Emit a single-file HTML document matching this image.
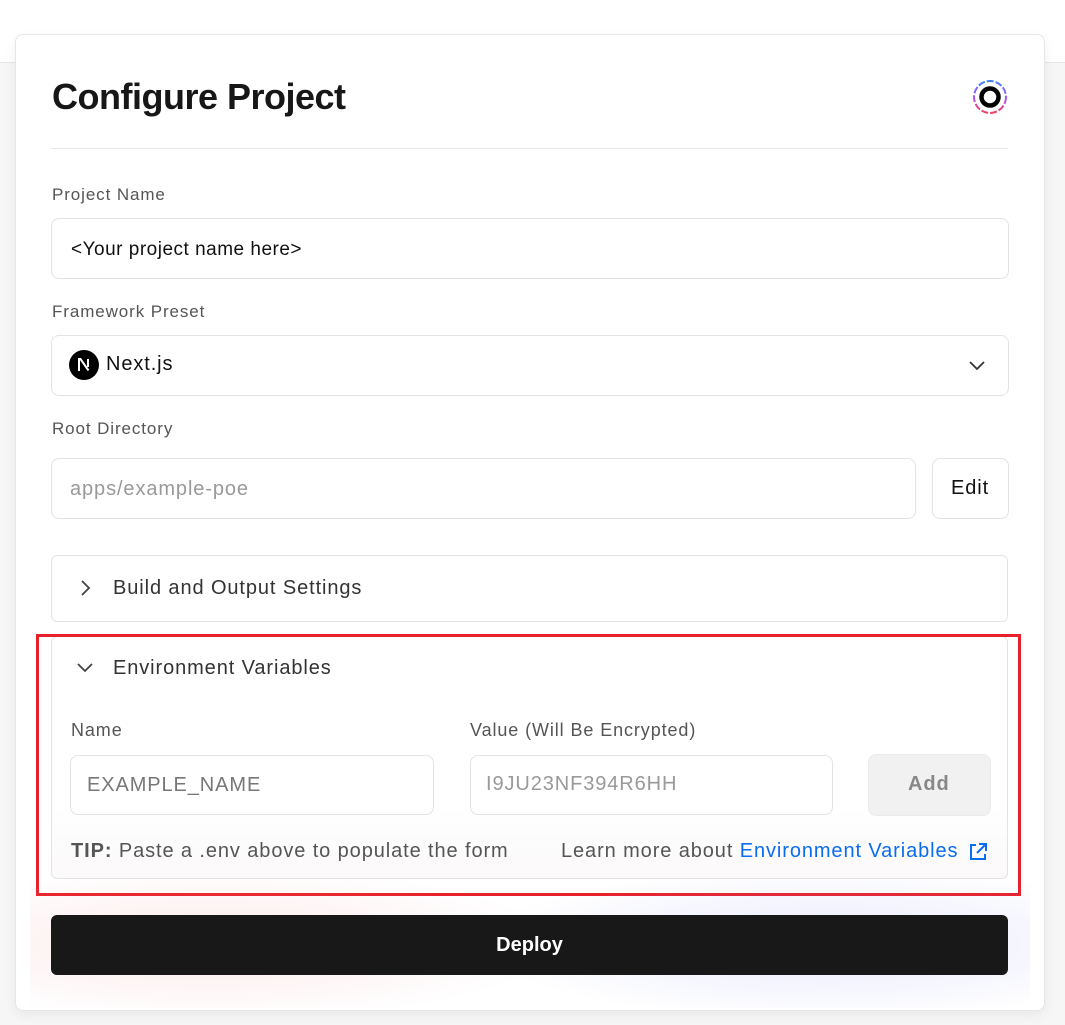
<!DOCTYPE html>
<html><head><style>
*{box-sizing:border-box;margin:0;padding:0}
body{width:1065px;height:1025px;background:#f6f6f6;font-family:"Liberation Sans",sans-serif;position:relative;overflow:hidden}
.top{position:absolute;left:0;top:0;width:1065px;height:63px;background:#fff;border-bottom:1px solid #e6e6e6}
.card{position:absolute;left:15px;top:34px;width:1030px;height:977px;background:#fff;border:1px solid #e6e6e6;border-radius:8px;box-shadow:0 4px 12px rgba(0,0,0,.06)}
.a{position:absolute}
h1{position:absolute;left:52px;top:76px;font-size:36px;font-weight:bold;color:#171717;letter-spacing:-0.5px}
.lbl{position:absolute;font-size:17px;color:#555;letter-spacing:0.9px}
.box{position:absolute;border:1px solid #e3e3e3;border-radius:8px;background:#fff}
.t{position:absolute;font-size:20px;letter-spacing:0.9px}
</style></head><body>
<div class="top"></div>
<div class="card"></div>
<h1>Configure Project</h1>
<svg class="a" style="left:972px;top:79px" width="36" height="36" viewBox="0 0 36 36">
<defs><linearGradient id="g" x1="0" y1="0" x2="0" y2="1"><stop offset="0" stop-color="#3b82f6"/><stop offset="0.5" stop-color="#a855f7"/><stop offset="1" stop-color="#f43f5e"/></linearGradient></defs>
<circle cx="18" cy="18" r="16" fill="none" stroke="url(#g)" stroke-width="2" stroke-dasharray="7 2"/>
<circle cx="18" cy="18" r="8.5" fill="none" stroke="#000" stroke-width="4.5"/>
</svg>
<div class="a" style="left:51px;top:148px;width:957px;height:1px;background:#e8e8e8"></div>

<div class="lbl" style="left:52px;top:185px">Project Name</div>
<div class="box" style="left:51px;top:218px;width:958px;height:61px"></div>
<div class="t" style="left:71px;top:239px;font-size:19px;color:#111;letter-spacing:0.5px">&lt;Your project name here&gt;</div>

<div class="lbl" style="left:52px;top:302px">Framework Preset</div>
<div class="box" style="left:51px;top:335px;width:958px;height:61px"></div>
<svg class="a" style="left:69px;top:350px" width="30" height="30" viewBox="0 0 30 30"><circle cx="15" cy="15" r="15" fill="#000"/><path d="M10 21V9h1.5l8 11.5M19 9v8" stroke="#fff" stroke-width="2" fill="none"/></svg>
<div class="t" style="left:106px;top:353px;color:#111">Next.js</div>
<svg class="a" style="left:968px;top:358px" width="18" height="14" viewBox="0 0 18 14"><path d="M2 4l7 7 7-7" stroke="#333" stroke-width="1.8" fill="none"/></svg>

<div class="lbl" style="left:52px;top:419px">Root Directory</div>
<div class="box" style="left:51px;top:458px;width:865px;height:61px"></div>
<div class="t" style="left:70px;top:478px;color:#999">apps/example-poe</div>
<div class="box" style="left:932px;top:458px;width:77px;height:61px"></div>
<div class="t" style="left:951px;top:477px;color:#111">Edit</div>

<div class="box" style="left:51px;top:555px;width:957px;height:67px;border-radius:6px"></div>
<svg class="a" style="left:78px;top:578px" width="14" height="20" viewBox="0 0 14 20"><path d="M4 3l7 7-7 7" stroke="#444" stroke-width="1.8" fill="none"/></svg>
<div class="t" style="left:113px;top:577px;color:#333">Build and Output Settings</div>

<div class="box" style="left:51px;top:636px;width:957px;height:243px;border-radius:6px;background:linear-gradient(#fff 70%,#fbf9fa)"></div>
<svg class="a" style="left:75px;top:661px" width="20" height="14" viewBox="0 0 20 14"><path d="M3 3l7 7 7-7" stroke="#444" stroke-width="1.8" fill="none"/></svg>
<div class="t" style="left:113px;top:657px;color:#333">Environment Variables</div>
<div class="lbl" style="left:71px;top:720px;font-size:18px">Name</div>
<div class="lbl" style="left:470px;top:720px;font-size:18px">Value (Will Be Encrypted)</div>
<div class="box" style="left:70px;top:755px;width:364px;height:60px"></div>
<div class="t" style="left:87px;top:774px;color:#777">EXAMPLE_NAME</div>
<div class="box" style="left:470px;top:755px;width:363px;height:60px"></div>
<div class="t" style="left:486px;top:773px;color:#999">I9JU23NF394R6HH</div>
<div class="box" style="left:868px;top:754px;width:123px;height:62px;background:#f1f1f1;border-color:#ebebeb"></div>
<div class="t" style="left:908px;top:773px;color:#888;font-weight:bold">Add</div>
<div class="t" style="left:71px;top:840px;color:#555"><b>TIP:</b> Paste a .env above to populate the form</div>
<div class="t" style="left:561px;top:840px;color:#555">Learn more about <span style="color:#0a6cf0">Environment Variables</span></div>
<svg class="a" style="left:967px;top:841px" width="22" height="22" viewBox="0 0 22 22"><path d="M9 4H4v14h14v-5M12 3h7v7M19 3l-9 9" stroke="#0a6cf0" stroke-width="2" fill="none"/></svg>

<div class="a" style="left:36px;top:634px;width:985px;height:262px;border:3px solid #e8202a"></div>

<div class="a" style="left:30px;top:880px;width:1000px;height:128px;background:radial-gradient(ellipse 35% 60% at 18% 50%,rgba(240,160,160,.22),transparent),radial-gradient(ellipse 35% 60% at 80% 50%,rgba(150,160,240,.22),transparent)"></div>
<div class="a" style="left:51px;top:915px;width:957px;height:60px;background:#181818;border-radius:6px;color:#fff;font-size:20px;font-weight:bold;text-align:center;line-height:60px">Deploy</div>
</body></html>
